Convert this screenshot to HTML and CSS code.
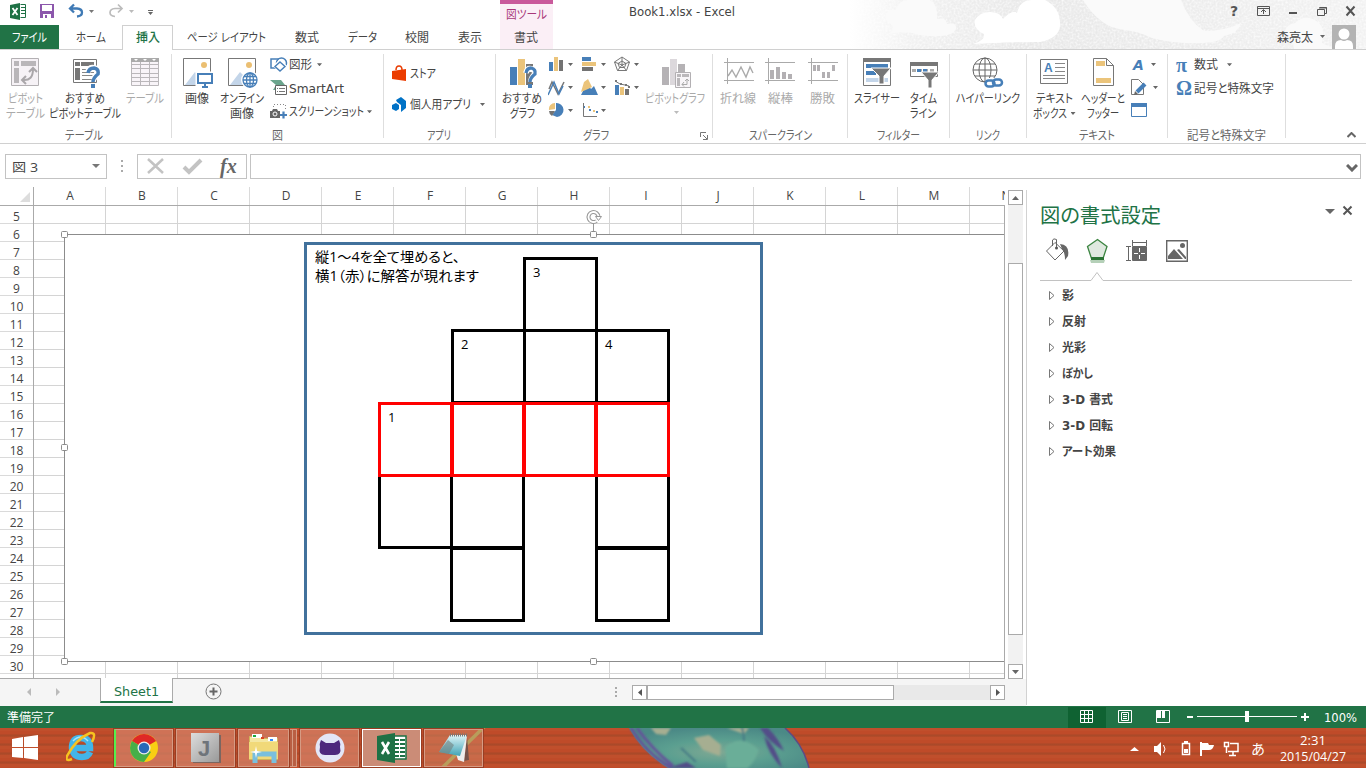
FILE: index.html
```html
<!DOCTYPE html>
<html lang="ja">
<head>
<meta charset="utf-8">
<title>Book1.xlsx - Excel</title>
<link rel="stylesheet" href="styles.css">
</head>
<body>
<header class="top">
  <svg class="clouds" width="516" height="49" viewBox="850 0 516 49">
    <defs>
      <linearGradient id="fade" x1="0" x2="1"><stop offset="0" stop-color="#fff"/><stop offset=".12" stop-color="#f1f1f1"/><stop offset=".35" stop-color="#e8e8e8"/><stop offset=".7" stop-color="#ededed"/><stop offset="1" stop-color="#f2f2f2"/></linearGradient>
      <filter id="grain" x="0" y="0" width="1" height="1"><feTurbulence type="fractalNoise" baseFrequency=".5" numOctaves="2"/><feColorMatrix values="0 0 0 0 1  0 0 0 0 1  0 0 0 0 1  1.6 0 0 0 -.6"/></filter>
    </defs>
    <rect x="850" width="516" height="49" fill="url(#fade)"/>
    <rect x="850" width="516" height="49" filter="url(#grain)"/>
    <path fill="#fafafa" d="M886 35Q895 31 892 25Q883 20 886 13Q891 8 896 10Q899 0 908 0H930Q938 4 937 19Q946 17 947 24Q957 22 956 29Q953 36 940 36Q925 37 912 33Q897 31 886 35Z"/>
    <path fill="#fff" d="M973 44Q985 41 984 34Q973 29 975 20Q980 12 990 12Q1000 12 1003 19Q1013 9 1017 13Q1020 0 1032 0H1045Q1061 8 1060 26Q1059 38 1040 42Q1000 42 973 44Z"/>
    <path fill="#fafafa" d="M1083 0H1181Q1188 20 1204 31Q1225 31 1241 23Q1238 34 1224 36Q1220 43 1199 43Q1173 44 1152 38Q1137 31 1125 30Q1100 28 1083 0Z"/>
    <path fill="#fafafa" d="M1285 35Q1284 25 1295 23Q1307 12 1320 24Q1325 30 1322 43L1335 49H1294Q1294 40 1285 35Z"/>
  </svg>
  <div class="titlebar">
    <svg width="170" height="25" viewBox="0 0 170 25">
      <path fill="#1e7145" d="M10 5l10-2v17l-10-2z"/><path d="M12.500 8l5 7M17.500 8l-5 7" stroke="#fff" stroke-width="1.800"/>
      <path fill="#fff" stroke="#1e7145" d="M20.500 4.500h5v13h-5"/><path d="M21 7.500h4M21 10.500h4M21 13.500h4" stroke="#1e7145"/>
      <path fill="#8c57ac" d="M40 4h14v14H40z"/><path fill="#fff" d="M42 5h10v6H42zM43 14h8v4h-8z"/><path fill="#8c57ac" d="M45 15h2v3h-2z"/>
      <path fill="none" stroke="#3f7ab5" stroke-width="2.300" d="M71 8.500h6q5 .5 5 4t-5 4M74 4.500l-4 4l4 4"/>
      <path fill="#777" d="M89 10h5l-2.500 3z"/><path fill="none" stroke="#bcbcbc" stroke-width="1.700" d="M121 8.500h-6q-5 .5-5 4t5 4M118 4.500l4 4l-4 4"/>
      <path fill="#bbb" d="M129 10h5l-2.500 3z"/><path fill="#666" d="M148 10h5v1h-5zM148 12h5l-2.500 3z"/>
    </svg>
    <div class="context-title"><span class="t" data-w="41">図ツール</span></div>
    <div class="book"><span class="t" data-w="106">Book1.xlsx - Excel</span></div>
    <svg class="window-tools" width="146" height="25" viewBox="1220 0 146 25">
      <text x="1230" y="16" class="help">?</text>
      <g fill="none" stroke="#555"><path d="M1257.500 6.500h12v9h-12zM1257 8.500h12M1263.500 14v-4M1261 12l2.500-2.500l2.500 2.500"/><path stroke-width="2" d="M1289 13h8"/><path d="M1319.500 7.500h7v6h-2M1317.500 9.500h7v6h-7zM1319 8h8"/><path stroke-width="2" d="M1346.500 6.500l8 9M1354.500 6.500l-8 9"/></g>
    </svg>
  </div>
  <nav class="tabs">
    <div class="tab file"><span class="t" data-w="35">ファイル</span></div>
    <div class="tab w63"><span class="t" data-w="30">ホーム</span></div>
    <div class="tab active"><span class="t" data-w="24">挿入</span></div>
    <div class="tab w107"><span class="t" data-w="79">ページ レイアウト</span></div>
    <div class="tab w54"><span class="t" data-w="24">数式</span></div>
    <div class="tab w56"><span class="t" data-w="29">データ</span></div>
    <div class="tab w53"><span class="t" data-w="24">校閲</span></div>
    <div class="tab w54"><span class="t" data-w="24">表示</span></div>
    <div class="tab format"><span class="t" data-w="24">書式</span></div>
    <div class="user"><span class="t" data-w="36">森亮太</span>
      <svg width="7" height="24"><path fill="#666" d="M0 10h5l-2.500 3z"/></svg>
      <svg width="24" height="24"><path fill="#b3b3b3" d="M0 0h24v24H0z"/><circle cx="12" cy="9" r="5.500" fill="#fff"/><path fill="#fff" d="M3 24v-3q0-6 6-6q3 2 6 0q6 0 6 6v3z"/></svg>
    </div>
  </nav>
</header>

<section class="ribbon">
  <div class="group g1"><div class="tools">
    <div class="big dim w50"><svg width="32" height="32"><path fill="#f6f2f6" stroke="#b3b0b3" d="M2.500 1.500h27v27h-27z"/><path fill="#b9b6b9" d="M5 4h5v5H5zM12 4h15v5H12zM5 11h5v15H5z"/><path fill="none" stroke="#aaa7aa" stroke-width="2" d="M14 23q10 1 10-11M20 15l4-4l4 4M17 19l-4 4l4 4"/></svg>
      <span class="t" data-w="35">ピボット</span><span class="t" data-w="39">テーブル</span></div>
    <div class="big w70"><svg width="32" height="32"><path fill="#fff" stroke="#777" d="M4.500 2.500h23v23h-23z"/><path fill="#777" d="M6 5h5v4H6zM12 5h13v4H12zM6 11h5v12H6z"/><path stroke="#888" d="M13 12.500h12M13 15.500h12M13 18.500h12M13 22.500h12"/><path fill="none" stroke="#fff" stroke-width="6" d="M19 15q1-5 6-4q5 1 4 5q-4 5-5 7"/><path fill="none" stroke="#477fb8" stroke-width="3.500" d="M19 16q1-5 6-5q5 1 4 6q-5 4-5 8"/><path fill="#477fb8" d="M22 27h4v4h-4z"/></svg>
      <span class="t" data-w="40">おすすめ</span><span class="t" data-w="72">ピボットテーブル</span></div>
    <div class="big dim w50"><svg width="32" height="32"><path fill="#f8f4f8" stroke="#bab7ba" d="M2.500 1.500h27v27h-27zM2 7.500h28M2 11.500h28M2 16.500h28M2 20.500h28M2 24.500h28M11.500 5v24M20.500 5v24"/><path fill="#aaa" d="M2 1h28v4H2z"/><path fill="#fff" d="M5 2h4l-2 2zM14 2h4l-2 2zM23 2h4l-2 2z"/></svg>
      <span class="t" data-w="38">テーブル</span></div>
  </div><div class="name"><span class="t" data-w="38">テーブル</span></div></div>

  <div class="group g2"><div class="tools">
    <div class="big w50"><svg width="32" height="32"><path fill="#fff" stroke="#777" d="M2.500 1.500h27v27h-27z"/><path fill="#c3d5e9" d="M4 28l10-13l8 8v5z"/><circle cx="23" cy="8" r="3" fill="#ebbf72"/><path fill="#fff" stroke="#fff" stroke-width="5" d="M17 17h14v10H17z"/><path fill="#fff" stroke="#477fb8" stroke-width="2" d="M17 17h14v9H17z"/><path stroke="#477fb8" stroke-width="2" d="M24 27v3M21 30h6"/></svg><span class="t" data-w="24">画像</span></div>
    <div class="big w40"><svg width="32" height="32"><path fill="#fff" stroke="#777" d="M2.500 1.500h27v27h-27z"/><path fill="#c3d5e9" d="M4 28l10-13l8 8v5z"/><circle cx="23" cy="8" r="3" fill="#ebbf72"/><circle cx="24" cy="23" r="9" fill="#fff"/><g fill="none" stroke="#477fb8" stroke-width="1.300"><circle cx="24" cy="23" r="7"/><ellipse cx="24" cy="23" rx="3.500" ry="7"/><path d="M17 23h14M18 19.500h12M18 26.500h12M24 16v14"/></g></svg><span class="t" data-w="44">オンライン</span><span class="t" data-w="24">画像</span></div>
    <div class="smalls p8">
      <div class="row"><svg width="18" height="18"><path fill="#fff" stroke="#477fb8" stroke-width="1.500" d="M1 3h9v9H1z"/><circle cx="11.500" cy="7" r="5" fill="#fff" stroke="#477fb8" stroke-width="1.500"/><path fill="#fff" stroke="#fff" stroke-width="3" d="M10 5l5 5l-5 5l-5-5z"/><path fill="#fff" stroke="#477fb8" stroke-width="1.400" d="M10 6l5 4.500l-5 4.500l-5-4.500z"/></svg><span class="t" data-w="23">図形</span><i class="drop"></i></div>
      <div class="row"><svg width="18" height="18"><path fill="#6ba58d" d="M0 1h11l4 5l-4 5H3l3-5z"/><path fill="#fff" stroke="#666" d="M5.500 6.500h11v9h-11z"/><path stroke="#777" stroke-dasharray="1 1 6 1" d="M7 9.500h8M7 12.500h8"/></svg><span class="t" data-w="55">SmartArt</span></div>
      <div class="row"><svg width="18" height="18"><path fill="none" stroke="#888" stroke-dasharray="1 2" d="M3.500 7V1.500h12V8"/><path fill="#666" d="M0 8h2l1-2h4l1 2h2v7H0z"/><circle cx="5" cy="11" r="2" fill="#666" stroke="#fff"/><path stroke="#477fb8" stroke-width="2.200" d="M10 12h7M13.500 8.500v7"/></svg><span class="t" data-w="75">スクリーンショット</span><i class="drop near"></i></div>
    </div>
  </div><div class="name"><span class="t" data-w="11">図</span></div></div>

  <div class="group g3"><div class="tools"><div class="apps">
      <div class="row"><svg width="18" height="18"><path fill="none" stroke="#e93b00" stroke-width="1.500" d="M4 5q0-4 3-4t3 4"/><path fill="#eb3c00" d="M0 6l14-2v12l-14-2z"/></svg><span class="t" data-w="26">ストア</span></div>
      <div class="row"><svg width="18" height="18"><path fill="#0072c6" d="M0 9l4-2l3 2v4l-3 2l-4-2zM4 4l5-3l5 4v7l-5 4v-7l-4-3z"/></svg><span class="t" data-w="61">個人用アプリ</span><i class="drop wide"></i></div>
    </div></div><div class="name"><span class="t" data-w="24">アプリ</span></div></div>

  <div class="group g4"><div class="tools">
    <div class="big w52"><svg width="32" height="32"><path fill="#477fb8" d="M4 10h7v18H4z"/><path fill="#ebc47b" d="M12 2h7v26h-7z"/><path fill="#777" d="M20 7h7v21h-7z"/><path fill="none" stroke="#fff" stroke-width="6" d="M20 16q1-5 5-4q5 1 4 5q-4 4-4 8"/><path fill="none" stroke="#477fb8" stroke-width="3.300" d="M20 16q1-5 5-5q5 1 4 6q-5 4-5 8"/><path fill="#477fb8" d="M22 27h4v4h-4z"/></svg><span class="t" data-w="40">おすすめ</span><span class="t" data-w="25">グラフ</span></div>
    <svg class="charts" width="94" height="76" viewBox="548 50 94 76">
      <g fill="#477fb8"><path d="M549 62h4v9h-4zM582 57h9v4h-9zM581 95h17l-4-9l-3 3l-4-6zM615 85h4v10h-4zM583 106h2v2h-2zM589 109h2v2h-2zM596 111h2v2h-2z"/><path d="M556 110v-7a7 7 0 0 1 1 14l-5-2z"/></g>
      <g fill="#ebc47b"><path d="M554 57h4v14h-4zM582 62h14v4h-14zM581 92l3-10l4-3l4 8l-4 2zM620 87h4v8h-4zM555 109v-6a6 6 0 0 0-6 7zM588 106h2v2h-2zM593 110h2v2h-2z"/></g>
      <g fill="#737373"><path d="M559 60h4v11h-4zM582 67h11v4h-11zM625 89h4v6h-4zM549 111h6l-3 5q-3-2-3-5z"/></g>
      <g fill="none" stroke="#777"><path d="M615 81l5 3l5 1l4 1M583.500 103v13.500H597"/><path d="M622 57l7.500 5l-3 8.500h-9l-3-8.500zM622 61l4 2.500l-1.500 4h-5l-1.500-4zM622 57v8l7.500-3M614.500 62l7.500 3l-4.500 5.500M622 65l4.500 5.500"/><path stroke-width="1.500" d="M549 89l3-7l6 12l6-12"/></g>
      <path fill="none" stroke="#477fb8" stroke-width="1.500" d="M548 95l6-13l5 12l4-8"/><path fill="#777" d="M615 80h2v2h-2zM620 83h2v2h-2zM625 84h2v2h-2zM628 86h2v2h-2z"/>
      <path fill="#666" d="M568 63h5l-2.500 3zM601 63h5l-2.500 3zM634 63h5l-2.500 3zM568 86h5l-2.500 3zM601 86h5l-2.500 3zM634 86h5l-2.500 3zM568 109h5l-2.500 3zM601 109h5l-2.500 3z"/>
    </svg>
    <div class="big dim w66"><svg width="34" height="32"><path fill="#b5b2b5" d="M4 10h7v18H4zM20 7h7v21h-7z"/><path fill="#dcd8dc" d="M12 2h7v26h-7z"/><path fill="#f8f5f8" stroke="#b3b0b3" d="M17.500 15.500h15v15h-15z"/><path fill="#bbb8bb" d="M19 17h4v3h-4zM24 17h7v3h-7zM19 21h3v8h-3z"/><path fill="none" stroke="#aaa" d="M24 27.500h5v-5M27 24l2-2l2 2M26 25l-2 2.500l2 2"/></svg><span class="t" data-w="60">ピボットグラフ</span><i class="drop pale"></i></div>
  </div><div class="name"><span class="t" data-w="26">グラフ</span><svg class="launcher" width="8" height="8"><path fill="none" stroke="#777" d="M.5 5V.5H6M3 3l4 4M7.500 3v4.500H3"/></svg></div></div>

  <div class="group g5"><div class="tools">
    <div class="big dim w49"><svg width="32" height="32"><path fill="none" stroke="#aaa" d="M2 5.500h30M2 23.500h30M5.500 1v26"/><path fill="none" stroke="#aaa" stroke-width="1.400" d="M6 19l4-6l4 7l5-10l5 10l4-10l3 6"/></svg><span class="t" data-w="36">折れ線</span></div>
    <div class="big dim w36"><svg width="32" height="32"><path fill="none" stroke="#aaa" d="M1 5.500h30M1 23.500h30M4.500 1v26"/><path fill="#b3b0b3" d="M6 13h4v9H6zM12 10h4v12h-4zM18 15h4v7h-4zM24 17h4v5h-4z"/></svg><span class="t" data-w="25">縦棒</span></div>
    <div class="big dim w49"><svg width="32" height="32"><path fill="none" stroke="#aaa" d="M1 5.500h30M1 23.500h30M4.500 1v26"/><path fill="#b3b0b3" d="M6 8h3v6H6zM10 8h3v6h-3zM15 15h3v6h-3zM20 15h3v6h-3zM25 8h3v6h-3z"/></svg><span class="t" data-w="25">勝敗</span></div>
  </div><div class="name"><span class="t" data-w="63">スパークライン</span></div></div>

  <div class="group g6"><div class="tools">
    <div class="big w58"><svg width="32" height="32"><path fill="#fff" stroke="#777" d="M2.500 1.500h27v27h-27z"/><path fill="#777" d="M2 1h28v4H2z"/><path fill="#477fb8" d="M5 7h22v4H5zM5 14h10v4H5z"/><path fill="#c3d5e9" d="M5 21h22v4H5z"/><path fill="#777" stroke="#fff" d="M10 11h20l-7 8v8h-5v-8z"/></svg><span class="t" data-w="46">スライサー</span></div>
    <div class="big w34"><svg width="32" height="32"><path fill="#fff" stroke="#777" d="M3.500 5.500h27v14h-27z"/><path fill="#777" d="M3 5h28v4H3z"/><path stroke="#aaa" stroke-width="3" stroke-dasharray="4 2" d="M5 13.500h24"/><path stroke="#477fb8" stroke-width="3" d="M10 13.500h4M16 13.500h4"/><path fill="#777" stroke="#fff" d="M14 15h18l-7 8v8h-4v-8z"/></svg><span class="t" data-w="27">タイム</span><span class="t" data-w="26">ライン</span></div>
  </div><div class="name"><span class="t" data-w="43">フィルター</span></div></div>

  <div class="group g7"><div class="tools"><div class="big w76"><svg width="32" height="32"><g fill="none" stroke="#666"><circle cx="13" cy="13" r="12"/><ellipse cx="13" cy="13" rx="6" ry="12"/><path d="M1 13h24M3 7h20M3 19h20M13 1v24"/></g><g fill="none"><path stroke="#fff" stroke-width="10" d="M14 26h15"/><rect x="13.500" y="23.500" width="9" height="6" rx="3" stroke="#477fb8" stroke-width="2.500"/><rect x="21" y="22.500" width="9" height="6" rx="3" stroke="#477fb8" stroke-width="2.500"/></g></svg><span class="t" data-w="64">ハイパーリンク</span></div></div><div class="name"><span class="t" data-w="24">リンク</span></div></div>

  <div class="group g8"><div class="tools">
    <div class="big w56"><svg width="32" height="32"><path fill="#fff" stroke="#777" d="M2.500 2.500h27v24h-27z"/><path stroke="#888" d="M17 6.500h10M17 10.500h10M17 14.500h10M5 18.500h22M5 21.500h22"/><text x="6" y="15" class="letter-a">A</text></svg><span class="t" data-w="37">テキスト</span><span><span class="t" data-w="34">ボックス</span><i class="drop tight"></i></span></div>
    <div class="big w42"><svg width="32" height="32"><path fill="#fff" stroke="#777" d="M6.500 1.500h13l7 7v20h-20z"/><path fill="none" stroke="#777" d="M19.500 1.500v7h7"/><path fill="#ebc47b" d="M9 4h9v5H9zM9 21h15v5H9z"/></svg><span class="t" data-w="44">ヘッダーと</span><span class="t" data-w="32">フッター</span></div>
    <svg class="text-tools" width="36" height="76" viewBox="1126 50 36 76">
      <text x="1133" y="70" class="wordart">A</text>
      <path fill="#fff" stroke="#777" d="M1131.500 79.500h7l5 5v10h-12z"/><path stroke="#477fb8" stroke-width="4" d="M1137 92l8-8"/><path fill="#666" d="M1134 95l1-4l3 3z"/>
      <path fill="#fff" stroke="#477fb8" d="M1131.500 103.500h15v13h-15z"/><path fill="#477fb8" d="M1131 103h16v4h-16z"/>
      <path fill="#666" d="M1151 63h5l-2.500 3zM1153 86h5l-2.500 3z"/>
    </svg>
  </div><div class="name"><span class="t" data-w="36">テキスト</span></div></div>

  <div class="group g9"><div class="tools"><div class="smalls p8">
      <div class="row"><b class="sym">π</b><span class="t" data-w="24">数式</span><i class="drop wide"></i></div>
      <div class="row"><b class="sym">Ω</b><span class="t" data-w="80">記号と特殊文字</span></div>
    </div></div><div class="name"><span class="t" data-w="79">記号と特殊文字</span></div></div>
  <svg class="collapse" width="9" height="6"><path fill="none" stroke="#666" stroke-width="2" d="M.5 5l4-4l4 4"/></svg>
</section>

<section class="formula">
  <div class="namebox"><span class="t" data-w="26">図 3</span><svg width="8" height="5"><path fill="#777" d="M0 0h8l-4 4z"/></svg></div>
  <svg class="grip" width="3" height="12"><path fill="#aaa" d="M0 0h2v2H0zM0 5h2v2H0zM0 10h2v2H0z"/></svg>
  <div class="fxbox"><svg width="108" height="23"><g fill="none" stroke="#c3c3c3"><path stroke-width="2.500" d="M10 4l15 14M25 4L10 18"/><path stroke-width="4" d="M46 12l5 5l12-12"/></g><text x="82" y="18" class="fx">fx</text></svg></div>
  <div class="input"><svg width="12" height="8"><path fill="none" stroke="#666" stroke-width="3" d="M1 1l5 5l5-5"/></svg></div>
</section>

<main class="work">
  <div class="book-area">
    <div class="grid-area">
      <div class="sheet">
        <div class="corner"><svg width="10" height="10"><path fill="#ddd" d="M10 0v10H0z"/></svg></div>
        <div class="cols"><span>A</span><span>B</span><span>C</span><span>D</span><span>E</span><span>F</span><span>G</span><span>H</span><span>I</span><span>J</span><span>K</span><span>L</span><span>M</span><span>N</span></div>
        <div class="rows"><span>5</span><span>6</span><span>7</span><span>8</span><span>9</span><span>10</span><span>11</span><span>12</span><span>13</span><span>14</span><span>15</span><span>16</span><span>17</span><span>18</span><span>19</span><span>20</span><span>21</span><span>22</span><span>23</span><span>24</span><span>25</span><span>26</span><span>27</span><span>28</span><span>29</span><span>30</span></div>
        <div class="cells">
          <svg class="drawing" width="970" height="472" viewBox="34 206 970 472">
            <path fill="#fff" stroke="#8c8c8c" d="M1010 234.500H64.500v427H1010"/>
            <rect x="305.500" y="243.500" width="456" height="390" fill="#fff" stroke="#41719c" stroke-width="3"/>
            <g fill="none" stroke="#000" stroke-width="3"><path d="M524.500 330.500v-72h72v72M452.500 403v-72.500h216V403M524.500 330v73M596.500 330v73M452 402.500h217"/><path d="M379.500 475v72.500h144V475M451.500 475v145.500h72V547M596.500 475v145.500h72V475M596 547.500h73M451 548.500h73M596 548.500h73"/></g>
            <g fill="none" stroke="red"><path stroke-width="3" d="M379.500 403.500h289v72h-289z"/><path stroke-width="4" d="M452 403v73M524 403v73M596 403v73"/></g>
            <g class="digits"><text x="533" y="277">3</text><text x="461" y="349">2</text><text x="605" y="349">4</text><text x="388" y="422">1</text></g>
            <g class="note"><text x="315" y="262" textLength="145" lengthAdjust="spacingAndGlyphs">縦1～4を全て埋めると、</text><text x="315" y="281" textLength="164" lengthAdjust="spacingAndGlyphs">横1（赤）に解答が現れます</text></g>
            <path stroke="#999" d="M593.500 223v8"/><path fill="none" stroke="#999" stroke-width="4" d="M598.500 217a5 5 0 1 0-2 4"/><path fill="none" stroke="#fff" stroke-width="1.800" d="M598.500 217a5 5 0 1 0-2 4"/><path fill="#fff" stroke="#999" d="M595.500 216.500h6l-3 4z"/>
            <g fill="#fff" stroke="#8c8c8c"><rect x="61.500" y="231.500" width="6" height="6" rx="1"/><rect x="61.500" y="444.500" width="6" height="6" rx="1"/><rect x="61.500" y="658.500" width="6" height="6" rx="1"/><rect x="590.500" y="231.500" width="6" height="6" rx="1"/><rect x="590.500" y="658.500" width="6" height="6" rx="1"/></g>
          </svg>
        </div>
      </div>
      <div class="vscroll"><div class="btn"><svg width="7" height="4"><path fill="#666" d="M0 4h7l-3.500-4z"/></svg></div><div class="vthumb"></div><div class="btn"><svg width="7" height="4"><path fill="#666" d="M0 0h7l-3.500 4z"/></svg></div></div>
    </div>
    <div class="sheetbar">
      <div class="arrows"><svg width="40" height="8"><path fill="#bbb" d="M5 0v8L1 4zM30 0v8l4-4z"/></svg></div>
      <div class="sheet-tab"><span class="t" data-w="45">Sheet1</span></div>
      <svg class="add" width="17" height="17"><circle cx="8.500" cy="8.500" r="7.500" fill="none" stroke="#777"/><path stroke="#666" stroke-width="2" d="M4.500 8.500h8M8.500 4.500v8"/></svg>
      <svg class="grip2" width="3" height="12"><path fill="#aaa" d="M0 0h2v2H0zM0 4h2v2H0zM0 8h2v2H0z"/></svg>
      <div class="hscroll"><div class="btn"><svg width="4" height="7"><path fill="#555" d="M4 0v7L0 3.500z"/></svg></div><div class="hthumb"></div><div class="btn"><svg width="4" height="7"><path fill="#555" d="M0 0v7l4-3.500z"/></svg></div></div>
    </div>
  </div>
  <aside class="pane">
    <div class="pane-head"><span class="t" data-w="121">図の書式設定</span><svg width="30" height="12"><path fill="#666" d="M1 4h10l-5 5z"/><path stroke="#555" stroke-width="2" d="M19.500 1.500l8 8M27.500 1.500l-8 8"/></svg></div>
    <svg class="pane-icons" width="313" height="46" viewBox="1040 236 313 46">
      <path fill="#fff" stroke="#666" d="M1046.500 251l8.500-8.500l9 8.500l-9 9z"/><path fill="none" stroke="#666" d="M1052.500 246v-6q1-2 4-.500v9"/><circle cx="1056.500" cy="248" r="1.500" fill="#555"/><path fill="#666" d="M1060 244q10 1 8 12l-3 4q0-8-3-11z"/>
      <path fill="#dfe9df" stroke="#3c8541" stroke-width="1.300" d="M1097.500 239.500l9.500 7l-4 12h-11.500l-4-12z"/><path fill="#2a7433" d="M1091 257h13v3h-13z"/><path fill="#b5d0b8" d="M1090 260h15l-1 3h-13z"/>
      <path fill="none" stroke="#666" d="M1132.500 240v6M1146.500 240v6M1132 242.500h14M1126 246.500h5M1126 260.500h5M1128.500 246v14"/><rect x="1132" y="246" width="15" height="15" rx="1" fill="#666"/><path stroke="#fff" d="M1139.500 248v4M1139.500 255v4M1134 253.500h4M1141 253.500h4"/>
      <path fill="#fff" stroke="#666" stroke-width="1.400" d="M1166.700 240.700h20.600v20.600h-20.600z"/><path fill="#666" d="M1168 259v-3l6-7l9 10zM1177 250l2-1l7 8v2h-1z"/><circle cx="1182.500" cy="245.500" r="2.500" fill="#666"/>
      <path fill="none" stroke="#c2c2c2" d="M1040 280.500h51l6-8l6 8h249"/>
    </svg>
    <ul class="options">
      <li><svg width="6" height="9"><path fill="#fff" stroke="#777" d="M.5 .5v8l4.500-4z"/></svg><span class="t" data-w="12">影</span></li>
      <li><svg width="6" height="9"><path fill="#fff" stroke="#777" d="M.5 .5v8l4.500-4z"/></svg><span class="t" data-w="24">反射</span></li>
      <li><svg width="6" height="9"><path fill="#fff" stroke="#777" d="M.5 .5v8l4.500-4z"/></svg><span class="t" data-w="24">光彩</span></li>
      <li><svg width="6" height="9"><path fill="#fff" stroke="#777" d="M.5 .5v8l4.500-4z"/></svg><span class="t" data-w="31">ぼかし</span></li>
      <li><svg width="6" height="9"><path fill="#fff" stroke="#777" d="M.5 .5v8l4.500-4z"/></svg><span class="t" data-w="51">3-D 書式</span></li>
      <li><svg width="6" height="9"><path fill="#fff" stroke="#777" d="M.5 .5v8l4.500-4z"/></svg><span class="t" data-w="51">3-D 回転</span></li>
      <li><svg width="6" height="9"><path fill="#fff" stroke="#777" d="M.5 .5v8l4.500-4z"/></svg><span class="t" data-w="54">アート効果</span></li>
    </ul>
  </aside>
</main>

<div class="status"><span class="t" data-w="48">準備完了</span>
  <svg width="250" height="22" viewBox="1068 706 250 22">
    <path fill="#0f6232" d="M1068 707h38v21h-38z"/>
    <g fill="none" stroke="#fff"><path d="M1080.500 710.500h12v12h-12zM1084.500 710v12M1088.500 710v12M1080 714.500h12M1080 718.500h12"/><path d="M1118.500 710.500h13v12h-13zM1121.500 712.500h7v8h-7zM1123 714.500h4M1123 716.500h4M1123 718.500h4"/><path d="M1156.500 710.500h13v12h-13z"/><path d="M1197 716.500h100"/></g>
    <path fill="#fff" d="M1157 711h4v7h-4zM1162 711h3v7h-3zM1187 716h6v2h-6zM1245 711h4v11h-4zM1301 716h8v2h-8zM1304 713h2v8h-2z"/>
  </svg>
  <span class="t zoom" data-w="33">100%</span>
</div>

<footer class="taskbar">
  <svg class="scene" width="400" height="40" viewBox="430 728 400 40">
    <defs><radialGradient id="ball" cx=".5" cy=".6" r=".6"><stop offset="0" stop-color="#7fa893"/><stop offset=".5" stop-color="#5b9f90"/><stop offset="1" stop-color="#4b8986"/></radialGradient><filter id="soft"><feGaussianBlur stdDeviation="1.200"/></filter></defs>
    <path stroke="#a3a64a" stroke-width="3.500" d="M440 770l45-44"/>
    <path fill="url(#ball)" d="M629 728q13 24 39 40h141q-6-24-24-40z"/>
    <g filter="url(#soft)"><path fill="none" stroke="#65539a" stroke-width="3" d="M631 728q14 24 40 40M637 728q14 20 36 38"/><path fill="#a6ae91" d="M694 738l15-3l12 10l-1 11l-17-6zM727 728h22l-5 6zM651 728h20l-5 7l-10-1z"/><path fill="none" stroke="#477b85" stroke-width="2" d="M742 728q4 12 0 38M681 748l15 14M732 742v26"/><path fill="#524e88" d="M760 728q9 14 24 23q-5-12-16-23zM764 736q12 10 18 32q-14-14-18-32zM668 768h28l-9-6z"/><path fill="#6bae98" d="M725 747q16-14 34 3q-6 15-12 18h-20z"/></g>
    <path fill="none" stroke="#5e4a84" stroke-width="1.500" d="M785 728q18 16 24 40"/>
  </svg>
  <div class="launch"><svg width="26" height="26"><path fill="#fff" d="M0 4l11-2v10H0zM12 2l14-2v12H12zM0 13h11v10L0 22zM12 13h14v12l-14-2z"/></svg></div>
  <div class="ie"><svg width="30" height="32"><path fill="none" stroke="#42b5e9" stroke-width="6.500" d="M7 17h17q0-10-9-10T6 17q1 9 10 9q6 0 8-5"/><path fill="none" stroke="#a8e5fa" stroke-width="1.500" d="M7 10q8-8 15 0"/><path fill="none" stroke="#f7c320" stroke-width="2.500" d="M6 28q-7 3-5-3Q10 8 24 2q7-1 2 9"/></svg></div>
  <div class="task running"><svg width="30" height="30"><circle cx="15" cy="15" r="14" fill="#f8cf13"/><path fill="#df2826" d="M15 15L2.900 8a14 14 0 0 1 24.200 0z"/><path fill="#46af49" d="M15 15L2.900 8A14 14 0 0 0 15 29l7-10z"/><circle cx="15" cy="15" r="6.500" fill="#eee"/><circle cx="15" cy="15" r="5.200" fill="#2869b8"/></svg></div>
  <div class="task"><svg width="30" height="30"><defs><linearGradient id="metal" x2="1" y2="1"><stop stop-color="#ddd"/><stop offset="1" stop-color="#999"/></linearGradient></defs><path fill="#7b6660" d="M2 2h28v28H2z"/><path fill="url(#metal)" d="M0 0h28v29H0z"/><text x="7" y="23" class="jay">J</text></svg></div>
  <div class="task stack"><svg width="32" height="32"><path fill="#f4e7a2" stroke="#cfb558" d="M1.500 4.500h11l2 2h15v21h-28z"/><path fill="#fff" d="M4 2h10v4H4zM20 5h9v4h-9z"/><path fill="#1aa83f" d="M5 3h3v2H5z"/><path fill="#d42" d="M13 5h3v2h-3z"/><path fill="#38f" d="M22 7h3v2h-3z"/><path fill="#f1d979" d="M1 10h29v17H1z"/><path fill="none" stroke="#79bfdd" stroke-width="5" d="M7 31v-9h19v9"/><path fill="#fff" d="M8 14l1 5l5 1l-5 1l-1 5l-1-5l-5-1l5-1z"/></svg></div>
  <div class="task"><svg width="30" height="30"><circle cx="15" cy="15" r="14.500" fill="#e3e6f7"/><path fill="#4d287d" d="M6 7l5 3h8l5-3q2 4 1 7q2 8-5 8H10q-7 0-5-8q-1-3 1-7z"/></svg></div>
  <div class="task current"><svg width="32" height="32"><path fill="#fff" stroke="#1e7145" stroke-width="1.500" d="M17 4h13v23H17z"/><path stroke="#1e7145" stroke-width="2" stroke-dasharray="5 1" d="M18 8h11M18 12h11M18 16h11M18 20h11M18 24h11"/><path fill="#1e7145" d="M1 4l18-3v30L1 28z"/><path stroke="#fff" stroke-width="2.600" d="M6 10l7 12M13 10l-7 12"/></svg></div>
  <div class="task faint"><svg width="32" height="32"><defs><linearGradient id="pad" x1="1" y2="1"><stop stop-color="#dff5f8"/><stop offset="1" stop-color="#40a3b5"/></linearGradient></defs><path fill="#76534b" d="M29 5l2 23l-5 1z"/><path fill="#eee" d="M12 3h17l-3 27l-6-2z"/><path fill="url(#pad)" d="M12 3h17l-7 21L1 20z"/><path fill="#71807f" d="M10 8l-9 12l10 2l5-9z" opacity=".6"/><path stroke="#777" stroke-dasharray="1 1" stroke-width="3" d="M12 3h17"/></svg></div>
  <svg class="tray" width="114" height="30" viewBox="1128 734 114 30">
    <path fill="#fff" d="M1130 751h9l-4.500-4z"/>
    <path fill="#fff" d="M1154 746h3l4-4v14l-4-4h-3z"/><path fill="none" stroke="#fff" d="M1163.500 745q3 4 0 8"/>
    <path fill="none" stroke="#fff" stroke-width="1.500" d="M1182.500 743.500h7v11h-7z"/><path fill="#fff" d="M1184 741h4v2h-4zM1184 749h4v4h-4zM1200 742h2v14h-2zM1202 743h6l1 2h5q-1 5-5 5h-7z"/>
    <path fill="none" stroke="#fff" stroke-width="1.500" d="M1230 743.500h8v8h-10M1233 752v3M1229 755.500h7M1224.500 742.500h4v4h-4zM1226.500 747v6"/>
  </svg>
  <div class="ime">あ</div>
  <div class="clock"><span class="t" data-w="26">2:31</span><span class="t" data-w="66">2015/04/27</span></div>
</footer>
<script src="fit.js"></script>
</body>
</html>
```
FILE: styles.css
```css
* { box-sizing: border-box; }
body { margin: 0; width: 1366px; height: 768px; overflow: hidden; display: flex; flex-direction: column; background: #fff; color: #444; font: 12px/15px "DejaVu Sans", "Noto Sans CJK JP", sans-serif; }
svg { display: block; flex: none; }
.t { display: inline-block; white-space: nowrap; transform-origin: 0 50%; font-feature-settings: "palt"; flex: none; }
.top { position: relative; height: 50px; border-bottom: 1px solid #d0d0d0; flex: none; }
.clouds { position: absolute; right: 0; top: 0; }
.titlebar { position: relative; height: 25px; display: flex; }
.context-title { margin-left: 330px; width: 53px; height: 25px; border-top: 4px solid #c9599b; background: #fbeff6; color: #a83879; display: flex; justify-content: center; line-height: 21px; }
.book { margin-left: 76px; padding-top: 4px; }
.window-tools { margin-left: auto; }
.help { font: bold 14px "DejaVu Sans", sans-serif; fill: #555; }
.tabs { position: relative; display: flex; height: 25px; }
.tab { display: flex; justify-content: center; line-height: 25px; height: 24px; flex: none; }
.file { width: 59px; background: #217346; color: #fff; }
.active { width: 51px; height: 25px; border: 1px solid #d0d0d0; border-bottom: 0; background: #fff; color: #217346; line-height: 23px; font-weight: 500; }
.format { width: 53px; background: #fbeff6; margin-left: 3px; padding-right: 1px; }
.w63 { width: 63px; } .w107 { width: 107px; } .w54 { width: 54px; } .w56 { width: 56px; } .w53 { width: 53px; }
.user { margin-left: auto; margin-right: 10px; display: flex; line-height: 24px; gap: 7px; }
.user svg:last-child { margin-left: -2px; }
.ribbon { height: 94px; flex: none; display: flex; border-bottom: 1px solid #d0d0d0; padding-top: 4px; position: relative; }
.group { height: 84px; border-right: 1px solid #dedede; flex: none; display: flex; flex-direction: column; }
.tools { display: flex; height: 73px; flex: none; margin-top: -1px; }
.name { display: flex; justify-content: center; color: #666; line-height: 18px; height: 16px; position: relative; }
.launcher { position: absolute; right: 4px; top: 6px; }
.g1 { width: 172px; } .g2 { width: 212px; } .g3 { width: 112px; } .g4 { width: 217px; } .g5 { width: 135px; }
.g6 { width: 102px; } .g7 { width: 77px; } .g8 { width: 141px; } .g9 { width: 118px; }
.g1 .name { padding-right: 3px; } .g3 .name { padding-right: 1px; } .g4 .name { padding-right: 17px; }
.big { display: flex; flex-direction: column; align-items: center; padding-top: 4px; flex: none; }
.big > svg { margin-bottom: 2px; }
.dim { color: #aaa; }
.w50 { width: 50px; } .w70 { width: 70px; } .w40 { width: 40px; } .w52 { width: 52px; } .w66 { width: 66px; }
.w49 { width: 49px; } .w36 { width: 36px; } .w58 { width: 58px; } .w34 { width: 34px; } .w76 { width: 76px; } .w56.big { width: 54px; } .w42 { width: 45px; margin-left: -1px; margin-right: 1px; }
.drop { display: inline-block; width: 5px; height: 3px; background: #666; clip-path: polygon(0 0, 100% 0, 50% 100%); margin-left: 5px; flex: none; vertical-align: middle; }
.drop.near { margin-left: 3px; }
.drop.wide { margin-left: 9px; } .drop.pale { background: #bbb; margin: 5px 0 0 3px; } .drop.tight { margin-left: 4px; }
.smalls { display: flex; flex-direction: column; }
.p8 { padding-left: 8px; }
.row { height: 23.5px; display: flex; align-items: center; flex: none; }
.row svg { margin-right: 1px; }
.apps { padding: 5px 0 0 8px; }
.apps .row { height: 31px; }
.apps .row svg { margin-right: 0; }
.charts, .text-tools { margin-top: -3px; }
.sym { width: 18px; font: bold 20px/20px "Liberation Serif", serif; color: #477fb8; }
.letter-a { font: bold 12px "Liberation Sans", sans-serif; fill: #477fb8; }
.wordart { font: italic bold 14px "DejaVu Sans", sans-serif; fill: #477fb8; }
.jay { font: bold 22px "Liberation Sans", sans-serif; fill: #6f747a; }
.collapse { position: absolute; right: 10px; top: 82px; }
.formula { height: 43px; flex: none; display: flex; padding: 10px 5px 8px; }
.namebox { width: 102px; height: 25px; border: 1px solid #c3c3c3; display: flex; align-items: center; justify-content: space-between; padding: 0 6px 0 6px; font-family: "Open Sans", "Noto Sans CJK JP", sans-serif; }
.grip { margin: 6px 13px 0 14px; }
.fxbox { width: 110px; height: 25px; border: 1px solid #c3c3c3; }
.fx { font: italic bold 20px/20px "Liberation Serif", serif; fill: #666; }
.input { flex: 1; margin-left: 3px; height: 25px; border: 1px solid #c3c3c3; display: flex; justify-content: flex-end; padding: 9px 2px 0; }
.work { height: 519px; flex: none; display: flex; }
.book-area { width: 1026px; flex: none; }
.grid-area { display: flex; height: 492px; }
.sheet { width: 1005px; height: 492px; display: grid; grid-template: 19px 473px / 34px 971px; overflow: hidden; font: 12px/18px "Open Sans", sans-serif; }
.corner { border-right: 1px solid #aaa; border-bottom: 1px solid #aaa; padding: 5px 0 0 20px; }
.cols { display: flex; border-bottom: 1px solid #aaa; overflow: hidden; }
.cols span { width: 72px; flex: none; text-align: center; border-right: 1px solid #dadada; padding-left: 1px; }
.rows { border-right: 1px solid #aaa; overflow: hidden; border-bottom: 1px solid #aaa; }
.rows span { display: block; height: 18px; line-height: 21px; border-bottom: 1px solid #dadada; text-align: center; }
.cells { border-right: 1px solid #aaa; border-bottom: 1px solid #aaa; background: repeating-linear-gradient(90deg, transparent 0 71px, #d4d4d4 71px 72px), repeating-linear-gradient(#fff 0 17px, #d4d4d4 17px 18px); }
.digits { font: 13px "Open Sans", sans-serif; fill: #000; }
.note { font: 14px "Open Sans", "Noto Sans CJK JP", sans-serif; fill: #000; font-feature-settings: "palt"; }
.vscroll { width: 15px; margin: 3px 0 0 3px; height: 489px; background: #f2f2f2; display: flex; flex-direction: column; }
.btn { width: 15px; height: 15px; border: 1px solid #aaa; background: #fff; display: flex; align-items: center; justify-content: center; flex: none; }
.vthumb { margin: 58px 0 29px; height: 372px; border: 1px solid #aaa; background: #fff; }
.sheetbar { height: 27px; background: #f5f5f5; display: flex; }
.arrows { width: 100px; padding: 9px 0 0 26px; }
.sheet-tab { width: 73px; height: 25px; margin-top: -1px; border: solid #aaa; border-width: 0 1px; border-bottom: 2px solid #217346; background: #fff; color: #217346; display: flex; justify-content: center; line-height: 26px; }
.add { margin: 4px 0 0 32px; }
.grip2 { margin: 8px 0 0 393px; }
.hscroll { width: 373px; height: 15px; margin: 6px 0 0 14px; background: #e9e9e9; display: flex; justify-content: space-between; }
.hthumb { width: 247px; border: 1px solid #aaa; background: #fff; margin-right: 96px; }
.pane { flex: 1; border-left: 1px solid #d2d2d2; margin-top: 3px; height: 515px; padding: 9px 12px 0 13px; }
.pane-head { display: flex; justify-content: space-between; color: #217346; font-size: 20px; line-height: 33px; height: 37px; }
.pane-head svg { margin: 6px 0 0 0; }
.options { list-style: none; margin: 0; padding: 0 0 0 9px; font-weight: bold; }
.options li { height: 26px; display: flex; align-items: center; }
.options svg { margin-right: 7px; }
.status { height: 22px; flex: none; background: #217346; color: #fff; display: flex; line-height: 22px; padding-left: 7px; }
.status > svg { margin-left: 1013px; }
.zoom { margin-left: 6px; }
.taskbar { height: 40px; flex: none; position: relative; display: flex; background: repeating-linear-gradient(#c04f2c 0 3px, #bf4b29 3px 6px, #a74929 7px, #b54c2a 9px); }
.scene { position: absolute; left: 430px; top: 0; }
.launch { width: 66px; padding: 7px 0 0 12px; }
.ie { width: 48px; padding-top: 3px; }
.task { position: relative; width: 59px; height: 38px; margin: 1px 3px 0 0; border: 1px solid #d69b84; outline: 1px solid #9a3d22; background: rgba(215, 135, 110, .65); display: flex; align-items: center; justify-content: center; flex: none; }
.running { border-left: 2px solid #55f04b; }
.stack { width: 51px; margin-right: 11px; box-shadow: 4px 0 0 -1px #b95f43, 4px 0 #d69b84, 8px 0 0 -1px #b95f43, 8px 0 #d69b84; }
.current { background: #cb8c77; border-color: #fff; }
.faint { background: rgba(215, 145, 115, .42); }
.tray { margin: 6px 0 0 642px; }
.ime { width: 18px; margin-left: 9px; color: #fff; font: 14px/41px "Noto Sans CJK JP", sans-serif; }
.clock { width: 70px; margin-left: 9px; color: #fff; display: flex; flex-direction: column; align-items: center; padding-top: 4px; line-height: 16px; font-family: "Open Sans", sans-serif; }
```
FILE: fit.js
```javascript
// Condense each label to its interface width, keeping the surrounding flow in step.
document.querySelectorAll('.t[data-w]').forEach(function (el) {
  var want = Number(el.dataset.w);
  var natural = el.getBoundingClientRect().width;
  el.style.transform = 'translateY(1px) scaleX(' + want / natural + ')';
  el.style.marginRight = (want - natural) + 'px';
});
```
